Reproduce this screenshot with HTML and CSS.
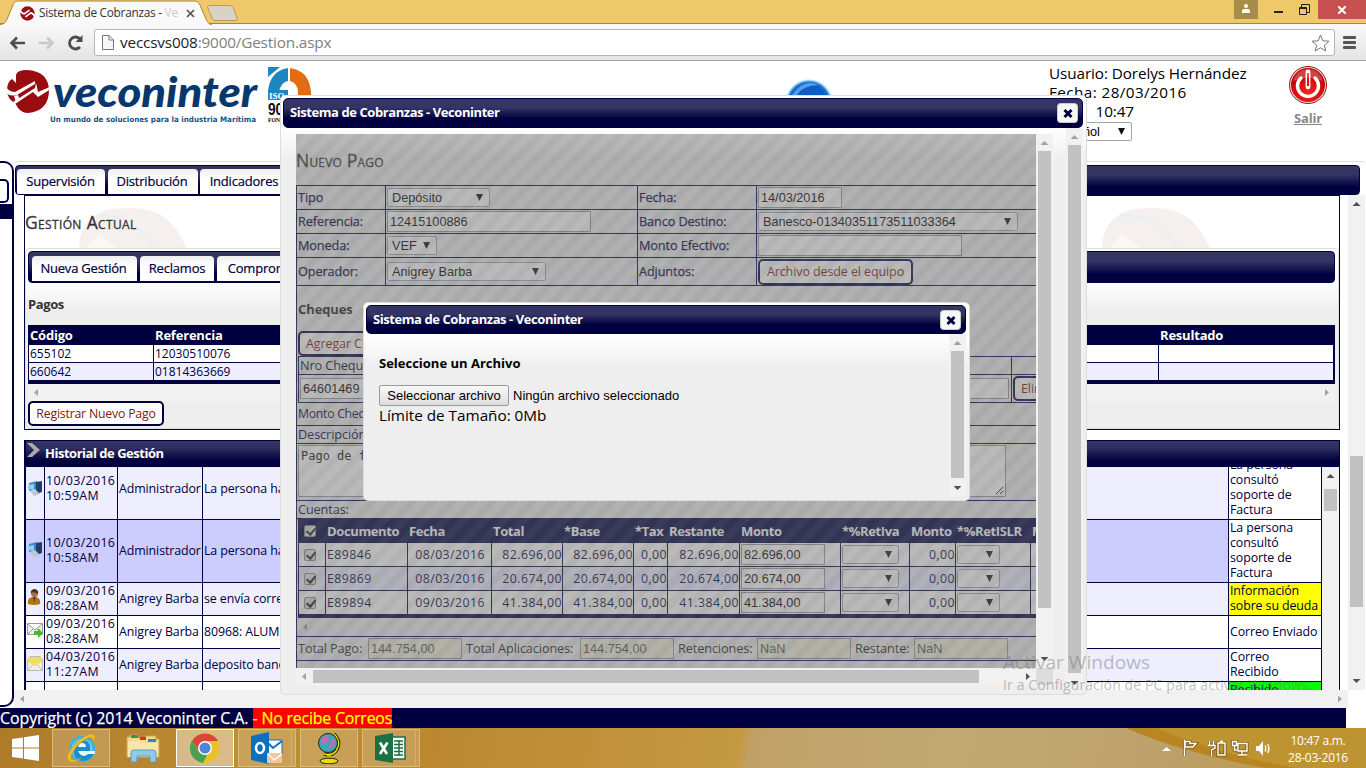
FILE: index.html
```html
<!DOCTYPE html>
<html lang="es">
<head>
<meta charset="utf-8">
<title>Sistema de Cobranzas - Veconinter</title>
<link rel="stylesheet" href="styles.css">
</head>
<body>
<div class="screen">

<div class="tabstrip">
  <svg class="tabshape" width="246" height="25" viewBox="0 0 246 25"><path d="M0 24.500C5 24 6 22 8 17L13 5C14.500 1.500 16 1 19 1H194C198 1 199 3 200 5L206 19C208 23 209 24.500 212 24.500" fill="#f9f9f9" stroke="#a8853f"/><path d="M208 8C207 6 208 5.500 210 5.500H229C232 5.500 233 7 234 9L237 18C238 20 237 20.500 235 20.500H217C214 20.500 212.500 20 211.500 17Z" fill="#d9d3c3" stroke="#b99a58"/></svg>
  <svg class="favicon" width="15" height="15" viewBox="0 0 44 44"><circle cx="22" cy="22" r="21" fill="#981015"/><path d="M0 12Q4 22 12 23L28 12M16 32L32 20Q40 22 44 32" fill="none" stroke="#fff" stroke-width="5"/></svg>
  <span class="tabtitle">Sistema de Cobranzas - <i>Ve</i></span>
  <svg class="tabx" width="9" height="9"><path d="M1 1L8 8M8 1L1 8" stroke="#555" stroke-width="1.700"/></svg>
  <div class="winbtns">
    <div class="person"><svg width="8" height="9"><circle cx="4" cy="2" r="2" fill="#fff"/><path d="M0 9V7Q0 5 2 5H6Q8 5 8 7V9Z" fill="#fff"/></svg></div>
    <svg class="min" width="9" height="3"><path d="M0 0H9V2H0Z" fill="#222"/></svg>
    <svg class="max" width="11" height="11"><path d="M.5 3.500H7.500V10.500H.5ZM2.500 3V.5H10.500V8.500H8M.5 4.500H7.500" fill="none" stroke="#222"/></svg>
    <div class="close"><svg width="8" height="8"><path d="M0 0L8 8M8 0L0 8" stroke="#fff" stroke-width="2"/></svg></div>
  </div>
</div>

<div class="toolbar">
  <svg class="nav" width="76" height="18" viewBox="0 0 76 18"><path d="M17 9H4M9 3.500L3.500 9L9 14.500" fill="none" stroke="#4d4d4d" stroke-width="2.600"/><path d="M31 9H44M39 3.500L44.500 9L39 14.500" fill="none" stroke="#c9c9c9" stroke-width="2.600"/><path d="M72 13A6 6 0 1 1 72 5" fill="none" stroke="#4d4d4d" stroke-width="2.800"/><path d="M74.500 1V8H67.500Z" fill="#4d4d4d"/></svg>
  <div class="omnibox">
    <svg width="12" height="15"><path d="M.5.5H7L11.500 5V14.500H.5ZM7 .5V5H11.500" fill="#f6f6f6" stroke="#777"/></svg>
    <span class="url">veccsvs008<i>:9000/Gestion.aspx</i></span>
    <svg class="star" width="19" height="18" viewBox="0 0 19 18"><path d="M9.500 1L11.800 6.800L18 7.200L13.300 11.200L14.800 17L9.500 13.800L4.200 17L5.700 11.200L1 7.200L7.200 6.800Z" fill="none" stroke="#777" stroke-linejoin="round"/></svg>
  </div>
  <div class="burger"><b></b><b></b><b></b></div>
</div>

<div class="header">
  <svg class="brand" width="312" height="66" viewBox="0 0 312 66">
    <defs><clipPath id="disc"><path d="M16 14Q17 9 27 9Q48 10 49 29Q49 50 28 52Q22 52 18 47L15 42Q7 38 7 29Q7 21 12 18L16 22Z"/></clipPath></defs>
    <g clip-path="url(#disc)"><rect width="56" height="60" fill="#990d10"/></g>
    <path d="M5 24Q8 31 15 31L35 20L35 23L17 34Q8 36 5 30ZM13 41L35 27L36 22L38 31L52 25L51 28L38 36L33 31L15 43Z" fill="#fff"/>
    <path d="M14 35L16 41L20 39L18 34Z" fill="#fff"/>
    <text class="logotext" x="53" y="46" textLength="204" lengthAdjust="spacingAndGlyphs">veconinter</text>
    <text class="slogan" x="50" y="61" textLength="206" lengthAdjust="spacingAndGlyphs">Un mundo de soluciones para la industria Marítima</text>
    <path d="M268 6H280L268 16Z" fill="#1c86c0"/><path d="M288 7V20Q281 21 279 31H268V30Q270 10 288 7Z" fill="#1c86c0"/><path d="M290 7Q310 10 311 32V38H298V32Q298 22 290 20Z" fill="#e36b12"/><rect x="268" y="29" width="20" height="10" fill="#1c86c0"/>
    <text class="iso" x="269" y="38">ISO</text><text class="iso9" x="268" y="54" textLength="30" lengthAdjust="spacingAndGlyphs">9001</text><text class="fon" x="268" y="61" textLength="42" lengthAdjust="spacingAndGlyphs">FONDONORMA</text>
  </svg>
  <svg class="orb" width="50" height="50" viewBox="0 0 50 50"><defs><radialGradient id="ob" cx=".5" cy=".5" r=".5"><stop offset=".75" stop-color="#0b5ec8"/><stop offset=".87" stop-color="#1b75dc"/><stop offset="1" stop-color="#6ad6ff" stop-opacity=".1"/></radialGradient></defs><circle cx="25" cy="25" r="24" fill="url(#ob)"/><path d="M8 17Q20 0 34 7Q18 8 13 17Z" fill="#8bc6f3" opacity=".6"/></svg>
  <div class="userinfo">
    <div>Usuario: Dorelys Hernández</div><div class="wide">Fecha: 28/03/2016</div><div>Hora: &nbsp;10:47</div>
    <div class="sel lang">Español</div>
  </div>
  <div class="exit">
    <svg width="40" height="40" viewBox="0 0 40 40"><defs><radialGradient id="rd" cx=".5" cy=".75" r=".6"><stop offset="0" stop-color="#f22"/><stop offset="1" stop-color="#bd0508"/></radialGradient></defs><circle cx="20" cy="20" r="18.500" fill="#e9dada" stroke="#a11"/><circle cx="20" cy="20" r="17" fill="url(#rd)"/><path d="M13 13A10.500 10.500 0 1 0 27 13" fill="none" stroke="#fff" stroke-width="3.400" stroke-linecap="round"/><path d="M20 7V22" stroke="#fff" stroke-width="4.800" stroke-linecap="round"/><path d="M20 8V21" stroke="#d11" stroke-width="2"/><path d="M5 16Q9 4 20 4Q31 4 35 16Q20 9 5 16Z" fill="#fff" opacity=".25"/></svg>
    <a>Salir</a>
  </div>
</div>

<div class="work">
  <div class="side"><div class="sidebtn"></div><div class="sideblock"></div></div>
  <div class="main">
    <div class="tabs top"><span class="w88">Supervisión</span><span class="w90">Distribución</span><span class="w90">Indicadores</span></div>
    <div class="scrollarea">
      <div class="content">
        <div class="panel">
          <svg class="girl g1" width="112" height="42" viewBox="0 0 112 42"><path d="M2 42Q2 12 30 3Q60-2 80 6Q98 14 110 42Z" fill="#f5efed"/><path d="M8 42L22 27L42 42Z" fill="#fdf7f4"/><path d="M20 8Q58 8 78 42" fill="none" stroke="#e8f1f2" stroke-width="3"/></svg>
          <svg class="girl g2" width="112" height="42" viewBox="0 0 112 42"><path d="M2 42Q2 12 30 3Q60-2 80 6Q98 14 110 42Z" fill="#f5efed"/><path d="M8 42L22 27L42 42Z" fill="#fdf7f4"/><path d="M20 8Q58 8 78 42" fill="none" stroke="#e8f1f2" stroke-width="3"/></svg>
          <h2>Gestión Actual</h2>
          <div class="inner">
            <div class="tabs second"><span class="w105">Nueva Gestión</span><span class="w74">Reclamos</span><span class="w140">Compromisos</span></div>
            <h4>Pagos</h4>
            <div class="pagos">
              <b>Código</b><b>Referencia</b><b>Resultado</b>
              <span>655102</span><span>12030510076</span><span></span>
              <span class="alt">660642</span><span class="alt">01814363669</span><span class="alt"></span>
            </div>
            <div class="hbar off"><i class="l"></i><i class="r"></i></div>
            <div class="btn">Registrar Nuevo Pago</div>
          </div>
        </div>
        <div class="history">
          <div class="histhead"><svg width="15" height="16"><path d="M1 1H6L14 8L6 15H1L8 8Z" fill="#aaa"/></svg>Historial de Gestión</div>
          <div class="histbody">
            <div class="rows">
              <div class="r a h52"><s><svg width="16" height="16" viewBox="0 0 16 16"><path d="M2 3L10 1V9L2 11Z" fill="#3b86c8"/><path d="M9 2L15 1V12L9 14Z" fill="#263c63"/><path d="M1 5L7 4V10L1 9Z" fill="#8ad2f4"/><path d="M3 11L9 10L13 14L7 16Z" fill="#b9c6d2"/></svg></s><span>10/03/2016 10:59AM</span><span>Administrador</span><span class="d">La persona ha consultado el soporte</span><span class="w up">La persona consultó soporte de Factura</span></div>
              <div class="r b h63"><s><svg width="16" height="16" viewBox="0 0 16 16"><path d="M2 3L10 1V9L2 11Z" fill="#3b86c8"/><path d="M9 2L15 1V12L9 14Z" fill="#263c63"/><path d="M1 5L7 4V10L1 9Z" fill="#8ad2f4"/><path d="M3 11L9 10L13 14L7 16Z" fill="#b9c6d2"/></svg></s><span>10/03/2016 10:58AM</span><span>Administrador</span><span class="d">La persona ha consultado el soporte</span><span class="w">La persona consultó soporte de Factura</span></div>
              <div class="r a h33"><s><svg width="14" height="16" viewBox="0 0 14 16"><path d="M1 15Q0 9 5 8H9Q14 9 13 15Q7 17 1 15Z" fill="#b87218"/><path d="M6 8L7 14L9 8Z" fill="#543"/><circle cx="7.500" cy="4.500" r="3.500" fill="#a5714a"/><path d="M3.500 4Q4 0 8 0Q12 1 11 5Q8 2 3.500 4Z" fill="#443322"/></svg></s><span>09/03/2016 08:28AM</span><span>Anigrey Barba</span><span class="d">se envía correo</span><span class="y">Información sobre su deuda</span></div>
              <div class="r c h33"><s><svg width="16" height="16" viewBox="0 0 16 16"><path d="M.5 1.500H15.500V12.500H.5ZM1 2L8 8L15 2M1 12L6 7M15 12L10 7" fill="#f0f0f0" stroke="#999"/><path d="M7 9H11V6L16 11L11 16V13H7Z" fill="#46b82c"/></svg></s><span>09/03/2016 08:28AM</span><span>Anigrey Barba</span><span class="d">80968: ALUMINIO</span><span class="w">Correo Enviado</span></div>
              <div class="r a h33"><s><svg width="16" height="16" viewBox="0 0 16 16"><path d="M.5 5L3 1.500H13L15.500 5V15.500H.5Z" fill="#f0f0e8" stroke="#bbb"/><path d="M1 2H15V7L8 11L1 7Z" fill="#f2dd63"/><path d="M1 15L6 9.500M15 15L10 9.500" stroke="#bbb"/></svg></s><span>04/03/2016 11:27AM</span><span>Anigrey Barba</span><span class="d">deposito bancario</span><span class="w">Correo<br>Recibido</span></div>
              <div class="r c last"><s></s><span></span><span></span><span class="d"></span><span class="g">Recibido</span></div>
            </div>
            <div class="vbar hv"><i class="u"></i><em></em></div>
          </div>
        </div>
      </div>
      <div class="vbar mv"><i class="u"></i><em></em><i class="dn"></i></div>
    </div>
    <div class="hbar off bottom"><i class="l"></i><i class="r"></i></div>
  </div>
</div>
<div class="footer">Copyright (c) 2014 Veconinter C.A. <mark>- No recibe Correos</mark></div>

<div class="dialog pay">
  <div class="titlebar">Sistema de Cobranzas - Veconinter<svg class="dx" width="21" height="20"><rect x=".5" y=".5" width="20" height="19" rx="3" fill="#f7f7f7" stroke="#ccc"/><path d="M7.500 7L14.500 14M14.500 7L7.500 14" stroke="#000040" stroke-width="3"/></svg></div>
  <div class="paybody">
    <div class="frame">
      <div class="formview">
        <div class="form">
          <h2>Nuevo Pago</h2>
          <div class="fields">
            <div>Tipo</div><div><p class="sel s102">Depósito</p></div><div>Fecha:</div><div><p class="inp i84">14/03/2016</p></div>
            <div>Referencia:</div><div><p class="inp i204">12415100886</p></div><div>Banco Destino:</div><div><p class="sel s259">Banesco-01340351173511033364</p></div>
            <div>Moneda:</div><div><p class="sel s50">VEF</p></div><div>Monto Efectivo:</div><div><p class="inp i204"></p></div>
            <div>Operador:</div><div><p class="sel s158">Anigrey Barba</p></div><div>Adjuntos:</div><div><p class="btn file">Archivo desde el equipo</p></div>
          </div>
          <div class="rest">
            <h4>Cheques</h4>
            <p class="btn add">Agregar Cheque</p>
            <div class="cheques"><div>Nro Cheque</div><div></div><div><p class="inp i710">64601469</p></div><div><p class="btn">Eliminar</p></div></div>
            <div class="line mc">Monto Cheques:</div>
            <div class="line desc">Descripción:</div>
            <div class="line ta"><p class="area">Pago de factura<svg width="9" height="9"><path d="M1 8L8 1M5 8L8 5" stroke="#333"/></svg></p></div>
            <div class="line cu">Cuentas:</div>
            <div class="cuentas">
              <b><u class="ck"></u></b><b>Documento</b><b>Fecha</b><b>Total</b><b>*Base</b><b>*Tax</b><b>Restante</b><b>Monto</b><b>*%RetIva</b><b>Monto</b><b>*%RetISLR</b><b>Monto</b>
              <div><u class="ck"></u></div><div>E89846</div><div class="n f">08/03/2016</div><div class="n">82.696,00</div><div class="n">82.696,00</div><div class="n">0,00</div><div class="n">82.696,00</div><div><p class="inp i84">82.696,00</p></div><div><p class="sel s57"></p></div><div class="n">0,00</div><div><p class="sel s43"></p></div><div></div>
              <div class="z"><u class="ck"></u></div><div class="z">E89869</div><div class="z n f">08/03/2016</div><div class="z n">20.674,00</div><div class="z n">20.674,00</div><div class="z n">0,00</div><div class="z n">20.674,00</div><div class="z"><p class="inp i84">20.674,00</p></div><div class="z"><p class="sel s57"></p></div><div class="z n">0,00</div><div class="z"><p class="sel s43"></p></div><div class="z"></div>
              <div><u class="ck"></u></div><div>E89894</div><div class="n f">09/03/2016</div><div class="n">41.384,00</div><div class="n">41.384,00</div><div class="n">0,00</div><div class="n">41.384,00</div><div><p class="inp i84">41.384,00</p></div><div><p class="sel s57"></p></div><div class="n">0,00</div><div><p class="sel s43"></p></div><div></div>
            </div>
            <div class="hbar clear"><i class="l"></i></div>
            <div class="totals"><span class="t1">Total Pago:</span><p class="inp dis">144.754,00</p><span class="t2">Total Aplicaciones:</span><p class="inp dis">144.754,00</p><span class="t3">Retenciones:</span><p class="inp dis">NaN</p><span class="t4">Restante:</span><p class="inp dis">NaN</p></div>
          </div>
        </div>
        <div class="veil"></div>
      </div>
      <div class="vbar fv"><i class="u"></i><em></em><i class="dn"></i></div>
      <div class="hbar fh"><i class="l"></i><em></em><i class="r"></i></div>
      <div class="corner"></div>
    </div>
    <div class="vbar pv"><i class="u"></i><em></em><i class="dn"></i></div>
  </div>
</div>

<div class="dialog pick">
  <div class="titlebar">Sistema de Cobranzas - Veconinter<svg class="dx" width="21" height="20"><rect x=".5" y=".5" width="20" height="19" rx="3" fill="#f7f7f7" stroke="#ccc"/><path d="M7.500 7L14.500 14M14.500 7L7.500 14" stroke="#000040" stroke-width="3"/></svg></div>
  <div class="pickbody">
    <div class="picktext"><h4>Seleccione un Archivo</h4><div class="filerow"><span class="choose">Seleccionar archivo</span>Ningún archivo seleccionado</div><div class="limit">Límite de Tamaño: 0Mb</div></div>
    <div class="vbar kv"><i class="u"></i><em></em><i class="dn"></i></div>
  </div>
</div>

<div class="activate"><div class="a1">Activar Windows</div><div class="a2">Ir a Configuración de PC para activar Windows.</div></div>

<div class="taskbar">
  <svg class="glow" width="240" height="40"><path d="M0 0H240V40H140Q70 25 0 0Z" fill="#bd9430"/><path d="M0 0H30Q90 26 170 40H140Q60 26 0 0Z" fill="#b98520"/></svg>
  <svg class="start" width="28" height="26"><path d="M0 4L11 2.500V12.500H0ZM12 2.300L27 0V12.500H12ZM0 13.500H11V23.500L0 22ZM12 13.500H27V26L12 23.700Z" fill="#fff"/></svg>
  <div class="app"><svg width="34" height="34" viewBox="0 0 34 34"><circle cx="18" cy="18" r="13" fill="#35b3e8"/><circle cx="18" cy="18" r="10.500" fill="#6bd0f5"/><path d="M10 16Q11 9 18 9Q26 9 26 17V20H15Q16 23 19 23H30Q26 30 18 30Q8 28 10 16Z" fill="#1a8cd0"/><path d="M14 16Q15 12 18 12Q22 12 22 16Z" fill="#e4f6fd"/><path d="M14 20H31V23H24Q18 28 14 20Z" fill="#e4f6fd"/><path d="M5 30Q-1 26 13 11Q27-1 31 5Q32 7 29 11Q30 5 24 7Q14 12 9 21Q4 28 9 29Q13 29 17 27Q9 34 5 30Z" fill="#f5bd22" stroke="#cf9315" stroke-width=".6"/></svg></div>
  <div class="app plain"><svg width="34" height="30" viewBox="0 0 34 30"><path d="M1 4H4V2H12V5H18L20 3H30V6H33V24H1Z" fill="#f3dc8d" stroke="#c9a953"/><path d="M5 2H12V5H5Z" fill="#2d9a3d"/><path d="M14 4H20V7H14Z" fill="#c93a2c"/><path d="M22 6H30V9H22Z" fill="#3d7fc2"/><path d="M2 8H13L15 10H32V24H2Z" fill="#f8e7a8"/><path d="M5 29V20Q5 17 8 17H27Q30 17 30 20V29H24V23H11V29Z" fill="#8fcbe8" stroke="#5b9cc0"/></svg></div>
  <div class="app live"><svg width="30" height="30" viewBox="0 0 30 30"><circle cx="15" cy="15" r="15" fill="#e8c12d"/><path d="M2 8A15 15 0 0 1 28 8H15L9 18Z" fill="#d8473a"/><path d="M2 7.500L9 19Q12 22 17 22L13 30A15 15 0 0 1 2 7.500Z" fill="#4aa153"/><circle cx="15" cy="15" r="7" fill="#fff"/><circle cx="15" cy="15" r="5.500" fill="#4d86d9"/></svg></div>
  <div class="app multi"><svg width="32" height="32" viewBox="0 0 32 32"><path d="M14 8H31V22H14Z" fill="#fff" stroke="#1170c4"/><path d="M15 9L22 16L31 9" fill="none" stroke="#1170c4" stroke-width="2"/><path d="M0 4L18 0V32L0 28Z" fill="#0c6fc0"/><ellipse cx="9" cy="16" rx="4" ry="5" fill="none" stroke="#fff" stroke-width="2.600"/><path d="M16 21H31V31H16Z" fill="#f5c59a"/><path d="M17 22L23 28L31 22" fill="none" stroke="#fff" stroke-width="1.500"/></svg></div>
  <div class="app"><svg width="26" height="32" viewBox="0 0 26 32"><path d="M18 2Q26 10 20 19Q16 24 8 22" fill="none" stroke="#221" stroke-width="3.500"/><path d="M18 2Q26 10 20 19Q16 24 8 22" fill="none" stroke="#f5e400" stroke-width="1.500"/><circle cx="12" cy="11" r="9.500" fill="#3aa7b4" stroke="#222"/><path d="M6 5L12 3L13 9L8 13L4 10ZM15 8L20 7L18 15L13 17Z" fill="#b86fb4"/><path d="M13 23V27" stroke="#c9b500" stroke-width="4"/><ellipse cx="13" cy="29" rx="9" ry="2.800" fill="#eedc00" stroke="#221"/></svg></div>
  <div class="app multi"><svg width="32" height="30" viewBox="0 0 32 30"><path d="M16 4H30V26H16Z" fill="#fff" stroke="#1d7044" stroke-width="1.500"/><path d="M19 8H28M19 11.500H28M19 15H28M19 18.500H28M19 22H28M24 7V23" stroke="#1d7044" stroke-width="1.500"/><path d="M0 3L18 0V30L0 27Z" fill="#1d7044"/><path d="M5 9.500L12 21M12.500 9.500L5 21" stroke="#fff" stroke-width="2.600"/></svg></div>
  <svg class="tray" width="112" height="18" viewBox="0 0 112 18"><path d="M0 12L4.500 8L9 12Z" fill="#fff"/><g fill="none" stroke="#3c2e0e" stroke-width="3.200" opacity=".5"><path d="M22.500 1V17M23 2.500H28V4.500H34L31 8H23ZM47.500 2V6M51.500 2V6M46 6.500H53V9L49.500 11V17M56 4H63V16H56ZM70.500 2.500H74.500V6.500H70.500ZM72.500 6V11H75M76 4.500H85V12H76ZM80 12V15.500M76 16H85"/></g><g fill="none" stroke="#fff" stroke-width="1.400"><path d="M22.500 1V17"/><path d="M23 2.500H28V4.500H34L31 8H23Z"/><path d="M47.500 2V6M51.500 2V6M46 6.500H53V9L49.500 11V17M56 4H63V16H56ZM58 2.500H61"/><path d="M70.500 2.500H74.500V6.500H70.500ZM72.500 6V11H75M76 4.500H85V12H76ZM80 12V15.500M76 16H85"/></g><path d="M94 7H97L101 2V17L97 12H94Z" fill="#fff"/><path d="M103 6.500Q105 9.500 103 12.500M105.500 5Q108.500 9.500 105.500 14" fill="none" stroke="#fff" stroke-width="1.300"/></svg>
  <div class="clock">10:47 a.m.<br>28-03-2016</div>
</div>
</div>
</body>
</html>
```
FILE: styles.css
```css
*{box-sizing:border-box}
body{margin:0;overflow:hidden}
.screen{position:relative;width:1366px;height:768px;overflow:hidden;display:flex;flex-direction:column;background:#fff;font:13px/15px "Open Sans","Noto Sans",sans-serif;letter-spacing:-.2px;color:#000}
h2,h4,p{margin:0}
i,s,u{font-style:normal;text-decoration:none}
svg{display:block;flex:none}

.tabstrip{position:relative;height:24px;flex:none;background:#efc869;border-bottom:1px solid #a8853f;display:flex}
.tabshape{position:absolute;left:0;top:0}
.favicon{position:absolute;left:20px;top:6px}
.tabtitle{position:absolute;left:39px;top:5px;font-size:11.800px;color:#333;white-space:nowrap;letter-spacing:-.25px}
.tabtitle i{color:#ccc}
.tabx{position:absolute;left:186px;top:9px}
.winbtns{margin-left:auto;display:flex;height:19px;width:132px}
.person{width:24px;flex:none;background:#a88c4a;display:grid;place-items:center;padding-bottom:2px}
.min{margin:11px 0 0 16px}
.max{margin:4px 0 0 16px}
.close{margin-left:8px;width:48px;background:#c75050;display:grid;place-items:center}

.toolbar{height:37px;flex:none;display:flex;align-items:flex-start;background:linear-gradient(#f9f9f9,#e4e4e4);border-bottom:1px solid #a6a6a6;padding-top:5px}
.nav{margin:5px 9px 0 8px}
.omnibox{width:1241px;height:27px;margin-left:1px;border:1px solid #b5b5b5;border-radius:3px;background:#fff;display:flex;align-items:center;padding:0 4px 0 7px}
.url{margin-left:6px;font-size:15.300px;color:#222;letter-spacing:-.17px}
.url i{color:#808080}
.star{margin-left:auto}
.burger{display:flex;flex-direction:column;gap:2px;margin:7px 0 0 8px}
.burger b{width:13px;height:3px;border-radius:1px;background:#555}

.header{height:100px;flex:none;display:flex;align-items:flex-start;line-height:19px}
.logotext{font:italic 900 42px Lato,sans-serif;fill:#06386d;letter-spacing:0}
.slogan{font:bold 7.500px "DejaVu Sans",sans-serif;fill:#175482;letter-spacing:0}
.iso{font:bold 9px "Liberation Serif",serif;fill:#fff;letter-spacing:0}
.iso9{font:bold 17px "Liberation Sans",sans-serif;fill:#111}
.fon{font:bold 7px "Liberation Serif",serif;fill:#111}
.orb{margin:17px 0 0 472px}
.userinfo{margin:3px 0 0 215px;width:226px;font-size:15.300px;letter-spacing:-.1px}
.userinfo .wide{letter-spacing:.4px}
.lang{width:83px;height:19px;margin-top:1px}
.exit{margin:4px 0 0 13px;width:40px;text-align:center}
.exit a{display:block;margin-top:4px;font-weight:bold;font-size:13px;color:#888;text-decoration:underline}

.sel,.inp{font:12.700px/18px "Liberation Sans",sans-serif;letter-spacing:0;background:#fff;border:1px solid #a5a5a5;white-space:nowrap;color:#000}
.sel{position:relative;height:19px;border-radius:2px;padding-left:4px}
.sel::after{content:"";position:absolute;right:6px;top:5px;width:7px;height:7px;background:#111;clip-path:polygon(0 0,100% 0,50% 100%)}
.inp{height:21px;line-height:20px;padding-left:2px;border-color:#999}

.work{height:547px;flex:none;display:flex}
.side{width:14px;height:546px;border:2px solid #000040;border-left:0;border-radius:0 10px 10px 0;padding-top:16px}
.sidebtn{width:9px;height:24px;border:2px solid #000040;border-left:0;border-radius:0 5px 5px 0}
.sideblock{height:15px;width:12px;background:#000040;margin-top:1px}
.main{width:1352px;border-top:1px solid #ddd;border-radius:4px}
.tabs{display:flex;gap:2px;background:linear-gradient(#353565,#353565 30%,#000040 75%);border-radius:4px;border:1px solid #000040;overflow:hidden}
.tabs span{background:linear-gradient(#eee,#fff 45%);border-radius:4px 4px 0 0;height:25px;line-height:25px;text-align:center;font-size:13px;color:#000040;white-space:nowrap;overflow:hidden;-webkit-text-stroke:.2px #000040}
.top{margin:3px 6px 0 1px;height:30px;padding:3px 1px}
.w88{width:88px}.w90{width:90px}.w105{width:105px}.w74{width:74px}.w140{width:104px}
.top .w88{margin-right:1px;text-indent:-1px}.top .w90{text-indent:-2px}
.second{margin:2px 3px 0 2px;height:32px;padding:4px 2px 4px 3px}
.second span+span{margin-left:1px}
.second .w105{text-indent:-2px}
.scrollarea{display:flex;height:495px;overflow:hidden}
.content{margin-left:10px;width:1324px;flex:none}
.panel{position:relative;width:1316px;height:235px;border:1px solid #000040;background:#fff}
.girl{position:absolute;top:11px}
.g1{left:52px}.g2{left:1075px}
h2{position:relative;font-size:17.500px;line-height:24px;font-variant:small-caps;font-weight:400;color:#333;letter-spacing:.2px;-webkit-text-stroke:.3px #333}
.panel h2{padding-top:14px;height:52px;letter-spacing:.35px}
.inner{position:relative;height:181px;border:1px solid #ddd;border-radius:4px;background:linear-gradient(#fff 32px,#eee 62px)}
h4{font-size:13px;line-height:18px}
.inner h4{padding:12px 2px 0;height:42px;color:#333;letter-spacing:-.4px}
.pagos{display:grid;grid-template-columns:125px 1005px 175px;grid-template-rows:19px 18px 18px;margin:0 2px;width:1307px;border:1px solid #000040;border-bottom-width:3px;background:#000040;line-height:17px;color:#000040;font-size:12px;letter-spacing:0}
.pagos>*{padding-left:1px;margin:0 1px 1px 0;background:#fff}
.pagos b{background:#000040;color:#fff;font-size:13px;margin:0;letter-spacing:-.2px;line-height:18px}
.pagos .alt{background:#eef}
.btn{border:2px solid #000040;border-radius:5px;background:#fff;height:25px;line-height:21px;padding:0 6px;color:#7a1a10;font-size:12.500px;white-space:nowrap;width:max-content}
.inner .btn{margin-left:2px;width:136px;text-align:center;padding:0;font-size:12.300px}
.hbar{position:relative;height:17px;background:#f1f1f1;display:flex;align-items:center;justify-content:space-between;padding:0 6px;width:100%}
.inner .hbar{width:1307px;margin-left:2px}
.hbar .l,.hbar .r{width:4px;height:7px;background:#555;clip-path:polygon(0 50%,100% 0,100% 100%)}
.hbar .r{clip-path:polygon(0 0,100% 50%,0 100%)}
.off i,.clear i,.fh .l{background:#a3a3a3!important}
.bottom{width:1334px;height:18px}
.history{width:1316px;height:260px;margin-top:10px;border:1px solid #000040;border-left-width:2px}
.histhead{height:26px;background:linear-gradient(#353565,#303060 25%,#000040 75%);color:#fff;font-weight:bold;display:flex;align-items:center;gap:4px;letter-spacing:-.48px;padding-bottom:2px}
.histhead svg{margin:-6px 0 0}
.histbody{display:flex;height:233px;overflow:hidden}
.rows{width:1296px}
.r{display:grid;grid-template-columns:19px 73px 85px 1026px 93px;color:#000040;font-size:12.400px;letter-spacing:-.1px}
.r>*{display:flex;align-items:center;border-right:1px solid #000040;border-bottom:1px solid #000040;padding-left:1px;overflow:hidden}
.r s{padding:0 0 4px 1px}
.r>:nth-child(2){letter-spacing:.35px}
.r>:nth-child(n+2){padding-bottom:2px}
.r .d{white-space:nowrap}
.h52{height:53px}.h63{height:63px}.h33{height:33px}
.h52>:nth-child(n+1):not(.up){padding-bottom:10px}
.last{height:20px}
.last .g{align-items:flex-start}
.r .up{align-items:flex-end}
.a{background:#eef}.b{background:#ccf}
.w{background:#fff}.y{background:#ff0}.g{background:#0f0}
.vbar{width:17px;background:#f1f1f1;display:flex;flex-direction:column;align-items:center;flex:none}
.vbar .u,.vbar .dn{width:8px;height:4px;background:#505050;clip-path:polygon(50% 0,100% 100%,0 100%)}
.vbar .dn{clip-path:polygon(0 0,100% 0,50% 100%);margin:auto 0 7px}
.vbar .u{margin-top:7px}
.vbar em{width:13px;background:#c1c1c1}
.hv em{margin-top:11px;height:22px}
.mv em{margin-top:250px;height:151px}
.footer{height:20px;width:1346px;flex:none;background:#000040;color:#fff;font-size:15.900px;line-height:20px;white-space:pre;letter-spacing:-.05px;-webkit-text-stroke:.25px}
.footer mark{display:inline-block;height:20px;background:red;color:#ff0;letter-spacing:-.2px}

.dialog{position:absolute;border:1px solid #ddd;border-radius:5px;background:linear-gradient(#fff 32px,#eee 65px);padding:2px}
.titlebar{position:relative;height:30px;border:1px solid #000040;border-radius:5px;background:linear-gradient(#353565,#353565 30%,#000040 70%);color:#fff;font-weight:bold;line-height:26px;padding:0 4px 1px 6px;display:flex;align-items:center;justify-content:space-between;letter-spacing:-.43px}
.dx{margin-top:1px}
.pay{left:280px;top:95px;width:807px;height:600px}
.pay .titlebar{width:800px;padding-bottom:2px}
.paybody{display:flex;justify-content:space-between;width:800px;height:564px}
.frame{display:grid;grid-template-columns:740px 17px;grid-template-rows:534px 17px;margin:6px 0 0 13px}
.formview{position:relative;overflow:hidden;background:linear-gradient(#fff,#eee 24px)}
.veil{position:absolute;inset:0;opacity:.5;background:repeating-linear-gradient(135deg,#666 0,#666 7.070px,#747474 7.070px,#747474 14.142px)}
.form{width:900px;height:534px;color:#000040;font-size:12.700px;letter-spacing:-.1px}
.form h2{padding-top:14px;height:51px}
.fields{display:grid;grid-template-columns:89px 252px 119px 439px;grid-template-rows:24px 24px 24px 28px;border:solid #000040;border-width:1px 0 0 1px}
.fields>:nth-child(odd){-webkit-text-stroke:.25px}
.fields>div{display:flex;align-items:center;border:solid #000040;border-width:0 1px 1px 0;padding-left:1px}
.s102{width:103px}.i84{width:84px}.i204{width:204px}.s259{width:260px}.s50{width:50px}.s158{width:159px}.s57{width:57px}.s43{width:43px}.i710{width:709px}
.file{width:155px;text-align:center;padding:0;height:26px;font-size:12.500px}
.rest{border-left:1px solid #000040;height:382px}
.rest h4{padding:14px 1px 0;height:45px;color:#222}
.add{margin-left:1px;width:150px}
.cheques{display:grid;grid-template-columns:713px 180px;grid-template-rows:18px 28px;margin-left:1px;border:solid #000040;border-width:1px 0 0 1px}
.cheques>div{display:flex;align-items:center;border:solid #000040;border-width:0 1px 1px 0;padding-left:1px}
.line{border-bottom:1px solid #000040;padding-left:1px}
.mc{height:23px;line-height:21px;font-size:12.300px;letter-spacing:-.3px}.desc{height:18px;line-height:17px}.cu{height:18px;line-height:17px}
.ta{height:57px;padding-top:1px}
.area{position:relative;width:708px;height:52px;border:1px solid #999;background:#fff;font:12px/20px "DejaVu Sans Mono",monospace;color:#111;padding-left:2px;letter-spacing:0}
.area svg{position:absolute;right:1px;bottom:1px}
.cuentas{display:grid;grid-template-columns:27px 82px 84px 71px 71px 34px 72px 101px 69px 46px 75px 80px;grid-template-rows:23px 24px 24px 24px;margin:0 0 0 1px;border:solid #000040;border-width:1px 0 3px 1px;letter-spacing:.45px;font-size:12.300px}
.cuentas>*{display:flex;align-items:center;padding-left:1px;border:solid #000040;border-width:0 1px 1px 0;background:#fff}
.cuentas .n{justify-content:flex-end;padding:0}
.cuentas .f{padding-right:6px}
.cuentas b{background:#000040;color:#fff;letter-spacing:-.38px;font-size:13px}
.cuentas .z{background:#eef}
.ck{position:relative;width:12px;height:12px;margin-left:4px;border:1px solid #888;border-radius:2px;background:#ddd}
.ck::after{content:"";position:absolute;left:3px;top:0;width:4px;height:7px;border:solid #222;border-width:0 2px 2px 0;transform:rotate(40deg)}
.clear{height:19px;background:none;border-bottom:1px solid #000040}
.totals{display:flex;align-items:center;height:24px;border-bottom:1px solid #000040;white-space:nowrap}
.totals span{padding-left:1px;flex:none;font-weight:400;color:#222}
.dis{width:94px;background:#f0f0dc;color:#555}
.t1{width:71px}.t2{width:118px;padding-left:4px!important}.t3{width:83px;padding-left:4px!important}.t4{width:63px;padding-left:4px!important}
.fh em{position:absolute;left:17px;top:2px;width:666px;height:13px;background:#c1c1c1}
.corner{background:#dcdcdc}
.vbar.fv .u,.vbar.pv .u,.vbar.kv .u{background:#a3a3a3}
.fv em{margin-top:6px;height:457px}
.pv em{margin-top:6px;height:528px}
.pick{left:363px;top:302px;width:607px;height:199px}
.pick .titlebar{width:600px;height:29px}
.pickbody{display:flex;justify-content:space-between;width:600px;height:163px}
.picktext{padding:20px 0 0 13px}
.pick h4{letter-spacing:0}
.filerow{display:flex;align-items:center;gap:4px;margin-top:13px;font:13px/19px "Liberation Sans",sans-serif;letter-spacing:0}
.choose{width:130px;height:21px;border:1px solid #999;border-radius:2px;background:linear-gradient(#f8f8f8,#ddd);text-align:center;white-space:nowrap}
.limit{font-size:15.300px;line-height:19px;letter-spacing:-.02px}
.kv em{margin-top:6px;height:127px}

.activate{position:absolute;left:1003px;top:650px;color:rgba(125,125,125,.5);white-space:nowrap}
.a1{font-size:19px;line-height:24px;letter-spacing:.05px}
.a2{font-size:14px;line-height:21px;letter-spacing:.12px}

.taskbar{position:relative;height:40px;flex:none;display:flex;align-items:center;background:linear-gradient(100deg,#ad7b28,#bf8d35 18%,#bb8830 32%,#c59843 54%,#bfa168 55%,#c2a974 70%,#bca06a 86%,#bd9430)}
.glow{position:absolute;right:0;top:0}
.start{margin:-1px 12px 0 12px}
.app{position:relative;width:58px;height:38px;margin-right:4px;border:1px solid #dcbc7c;background:rgba(255,255,255,.18);display:grid;place-items:center}
.plain{border-color:transparent;background:none}
.live{border-color:#fff;background:rgba(255,255,255,.42)}
.multi::after{content:"";position:absolute;right:3px;top:-1px;bottom:-1px;width:1px;background:#d3b06c}
.tray{position:relative;margin:0 0 0 738px}
.clock{position:absolute;left:1278px;top:4px;width:80px;text-align:center;color:#fff;font-size:12px;line-height:17px;letter-spacing:-.28px}
```
